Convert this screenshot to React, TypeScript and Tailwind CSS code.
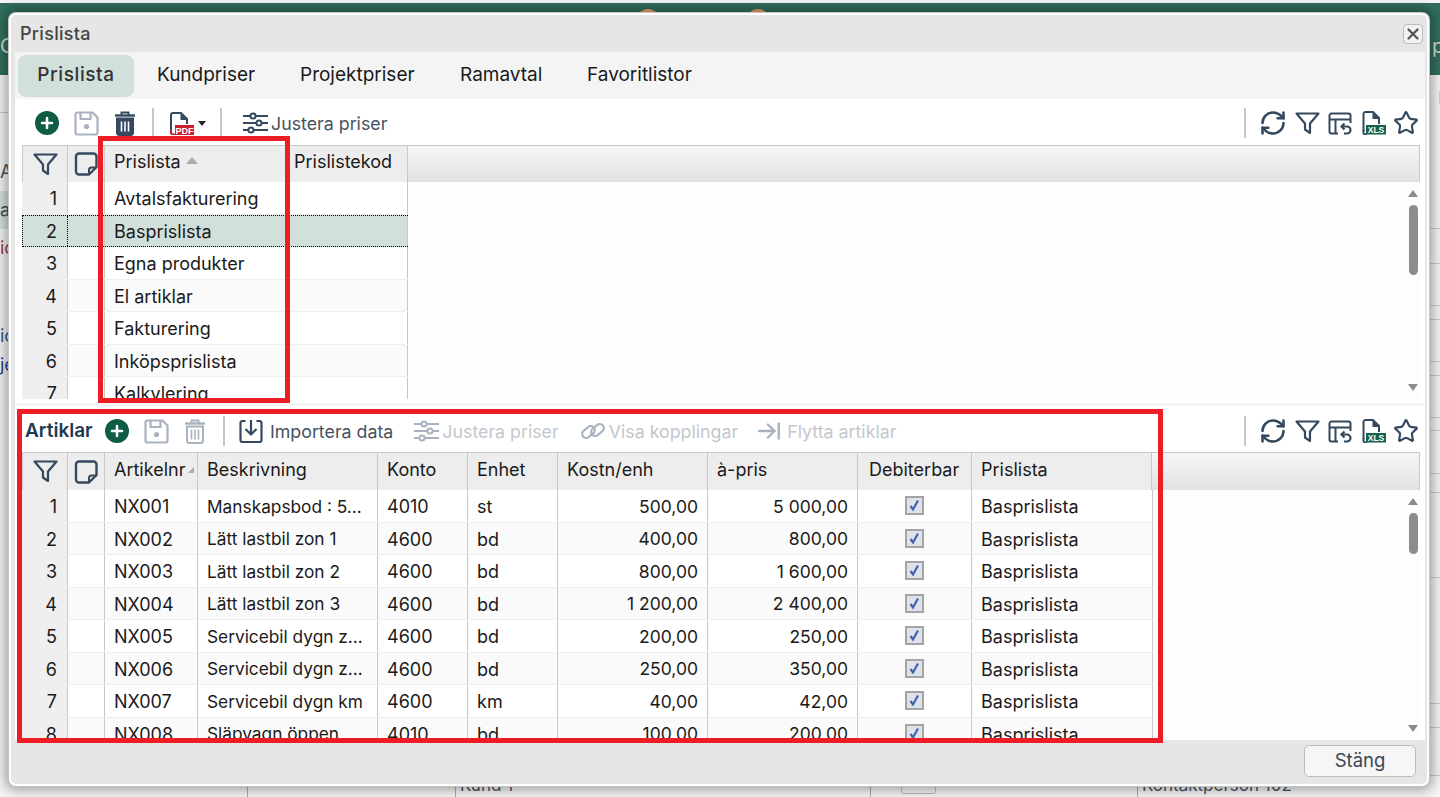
import React from "react";
import { RefreshCw, Star, ArrowRightToLine, X } from "lucide-react";

const INK = "#34495e";
const OFF = "#a8b3bf";

const firstRows = ["Avtalsfakturering", "Basprislista", "Egna produkter", "El artiklar", "Fakturering", "Inköpsprislista", "Kalkylering"];

const articles = [
  ["NX001", "Manskapsbod : 5…", "4010", "st", "500,00", "5 000,00"],
  ["NX002", "Lätt lastbil zon 1", "4600", "bd", "400,00", "800,00"],
  ["NX003", "Lätt lastbil zon 2", "4600", "bd", "800,00", "1 600,00"],
  ["NX004", "Lätt lastbil zon 3", "4600", "bd", "1 200,00", "2 400,00"],
  ["NX005", "Servicebil dygn z…", "4600", "bd", "200,00", "250,00"],
  ["NX006", "Servicebil dygn z…", "4600", "bd", "250,00", "350,00"],
  ["NX007", "Servicebil dygn km", "4600", "km", "40,00", "42,00"],
  ["NX008", "Släpvagn öppen", "4010", "bd", "100,00", "200,00"],
];

const rightLines = [228, 263, 305, 319, 361, 375, 417, 430, 473, 492, 577, 703, 727, 775];

const PlusIcon = () => (
  <svg width="24" height="24" viewBox="0 0 24 24">
    <circle cx="12" cy="12" r="12" fill="#0f5c46" />
    <path d="M12 7v10M7 12h10" stroke="#fff" strokeWidth="2.6" strokeLinecap="round" />
  </svg>
);

const SaveIcon = ({ color = OFF }: { color?: string }) => (
  <svg width="25" height="25" viewBox="0 0 25 25" fill="none" stroke={color} strokeWidth="2.2" strokeLinejoin="round">
    <path d="M3.5 1.5h15l5 5v15a2 2 0 0 1-2 2h-18a2 2 0 0 1-2-2v-18a2 2 0 0 1 2-2z" />
    <path d="M6.5 1.5v6.5h10v-6.5" />
    <circle cx="12.5" cy="15.5" r="2.6" fill={color} stroke="none" />
  </svg>
);

const TrashIcon = ({ color = INK, filled = true }: { color?: string; filled?: boolean }) => (
  <svg width="22" height="25" viewBox="0 0 22 25" fill="none" stroke={color} strokeWidth="2">
    <path d="M1 4.5h20" strokeWidth="2.4" />
    <path d="M7.5 4V1.5h7V4" />
    <path d="M3 7.5h16v14a2.5 2.5 0 0 1-2.5 2.5h-11A2.5 2.5 0 0 1 3 21.5z" fill={filled ? color : "none"} />
    <path d="M7.5 10.5v10M11 10.5v10M14.5 10.5v10" stroke={filled ? "#fff" : color} strokeWidth="1.6" />
  </svg>
);

const PdfIcon = () => (
  <svg width="24" height="23" viewBox="0 0 24 23" fill="none">
    <path d="M1 20V3a2 2 0 0 1 2-2h8l6 6v5" stroke={INK} strokeWidth="2" />
    <path d="M1 18v2.5a2 2 0 0 0 2 2h3" stroke="#c8202c" strokeWidth="2" />
    <path d="M10.5 1v7h7z" fill={INK} />
    <rect x="5" y="13" width="19" height="10" fill="#c8202c" />
    <text x="14.5" y="21.5" fontSize="9" fontWeight="700" fill="#fff" textAnchor="middle" fontFamily="Liberation Sans, sans-serif">PDF</text>
  </svg>
);

const XlsIcon = () => (
  <svg width="24" height="24" viewBox="0 0 24 24" fill="none">
    <path d="M1.5 20V3a2 2 0 0 1 2-2h7.5l6 6v6" stroke={INK} strokeWidth="2" />
    <path d="M10.5 1v7h7z" fill={INK} />
    <rect x="4" y="14" width="20" height="9.5" fill="#14624a" />
    <path d="M1.5 19v2.5a2 2 0 0 0 2 2H5" stroke={INK} strokeWidth="2" />
    <text x="14" y="22" fontSize="8.5" fontWeight="700" fill="#fff" textAnchor="middle" fontFamily="Liberation Sans, sans-serif">XLS</text>
  </svg>
);

const SlidersIcon = ({ color = INK }: { color?: string }) => (
  <svg width="25" height="24" viewBox="0 0 25 24" fill="none" stroke={color} strokeWidth="2">
    <path d="M0 5h7M13 5h12M0 12h13M19 12h6M0 19h5M11 19h14" />
    <circle cx="10" cy="5" r="2.6" />
    <circle cx="16" cy="12" r="2.6" />
    <circle cx="8" cy="19" r="2.6" />
  </svg>
);

const FilterIcon = () => (
  <svg width="25" height="23" viewBox="0 0 25 23" fill="none" stroke={INK} strokeWidth="2.2" strokeLinejoin="round">
    <path d="M1.5 1.5h22l-8.5 10v9.5l-5-3.5v-6z" />
  </svg>
);

const NoteIcon = () => (
  <svg width="24" height="24" viewBox="0 0 24 24" fill="none" stroke={INK} strokeWidth="2.4" strokeLinejoin="round">
    <path d="M5 1.5h14.5a3 3 0 0 1 3 3V15l-7.5 7.5H5a3 3 0 0 1-3-3v-15a3 3 0 0 1 3-3z" />
    <path d="M22.5 15.5h-5a2.5 2.5 0 0 0-2.5 2.5v4.5" strokeWidth="2" />
  </svg>
);

const TableUndoIcon = () => (
  <svg width="24" height="23" viewBox="0 0 24 23" fill="none" stroke={INK} strokeWidth="2">
    <path d="M10 21.5H3.5a2 2 0 0 1-2-2v-16a2 2 0 0 1 2-2h17a2 2 0 0 1 2 2V11" strokeLinejoin="round" />
    <path d="M1.5 7.5h21M7.5 7.5v14" />
    <path d="M13.5 14.5h5.5a3.2 3.2 0 0 1 0 7h-3" strokeWidth="2.2" />
    <path d="M16.5 11.5l-3 3 3 3" strokeWidth="2.2" />
  </svg>
);

const ImportIcon = () => (
  <svg width="24" height="24" viewBox="0 0 24 24" fill="none" stroke={INK} strokeWidth="2.2" strokeLinejoin="round">
    <path d="M6.5 2H3.5a2 2 0 0 0-2 2v17a2 2 0 0 0 2 2h17a2 2 0 0 0 2-2V4a2 2 0 0 0-2-2h-3" />
    <path d="M12 1v14M6.5 10l5.5 5.5L17.5 10" />
  </svg>
);

const LinkIcon = () => (
  <svg width="24" height="20" viewBox="0 0 24 20" fill="none" stroke={OFF} strokeWidth="2.2">
    <rect x="0.5" y="7" width="14" height="8" rx="4" transform="rotate(-40 7.5 11)" />
    <rect x="9.5" y="5" width="14" height="8" rx="4" transform="rotate(-40 16.5 9)" />
  </svg>
);

const Caret = () => <span className="w-0 h-0 border-x-[4px] border-x-transparent border-t-[5px] border-t-[#222]" />;

const Divider = () => <span className="w-[2px] h-[30px] bg-[#c8c8c8]" />;

const RightTools = () => (
  <div className="ml-auto flex items-center">
    <Divider />
    <span className="ml-[13px] w-[28px] flex justify-center">
      <RefreshCw size={28} color={INK} strokeWidth={2.2} />
    </span>
    <span className="ml-[8px] w-[25px] flex justify-center"><FilterIcon /></span>
    <span className="ml-[8px] w-[24px] flex justify-center"><TableUndoIcon /></span>
    <span className="ml-[10px] w-[24px] flex justify-center"><XlsIcon /></span>
    <span className="ml-[7px] w-[26px] flex justify-center">
      <Star size={26} color={INK} strokeWidth={2} />
    </span>
  </div>
);

const CheckBox = () => (
  <span className="w-[19px] h-[19px] border-2 border-[#a4a4a4] bg-[#dfe2ec] flex items-center justify-center">
    <svg width="13" height="13" viewBox="0 0 13 13" fill="none" stroke="#4263ad" strokeWidth="2.2">
      <path d="M2.5 7l2.5 3.5L10 1.5" />
    </svg>
  </span>
);

const HeadCell = ({ className, children }: { className: string; children?: React.ReactNode }) => (
  <div className={`h-full shrink-0 border-r border-[#c8c8c8] bg-[#ededed] flex items-center ${className}`}>{children}</div>
);

const Scrollbar = ({ thumb }: { thumb: string }) => (
  <div className="ml-auto mr-[2px] w-[10px] pt-[8px] pb-[8px] flex flex-col items-center">
    <span className="w-0 h-0 border-x-[5px] border-x-transparent border-b-[7px] border-b-[#8c8c8c]" />
    <span className={`mt-[8px] w-[9px] rounded-full bg-[#8c8c8c] ${thumb}`} />
    <span className="mt-auto w-0 h-0 border-x-[5px] border-x-transparent border-t-[7px] border-t-[#8c8c8c]" />
  </div>
);

const ToolButton = ({ label, off, icon, className, gap }: { label: string; off?: boolean; icon: React.ReactNode; className: string; gap: string }) => (
  <span className={`flex items-center whitespace-nowrap text-[17.8px] ${off ? "text-[#c3c7cc]" : "text-[#46525f]"} ${className}`}>
    {icon}
    <span className={`pt-[3px] ${gap}`}>{label}</span>
  </span>
);

export default function App() {
  return (
    <div className="relative h-[797px] overflow-hidden bg-[#f4f4f4] font-['Inter',sans-serif] text-[18px] text-[#1a1a1a]">
      {/* the page behind the dialog */}
      <div className="h-[3px]" />
      <header className="h-[72px] bg-[#316e5e] flex items-start text-[#cfdcd8] text-[20px] overflow-hidden">
        <span className="mt-[28px] w-[9px]">C</span>
        <span className="ml-[627px] mt-[6px] w-[24px] h-[24px] rounded-full bg-[#f4a06f]" />
        <span className="ml-[86px] mt-[6px] w-[24px] h-[24px] rounded-full bg-[#f4a06f]" />
        <span className="ml-auto mt-[28px] w-[8px]">p</span>
      </header>
      <div className="flex h-[722px]">
        <aside className="w-[9px] overflow-hidden text-[18px] text-[#46525f] whitespace-nowrap">
          <div className="h-[38px] border-b border-[#c8c8c8]" />
          <div className="h-[78px] pt-[40px] leading-[38px]">Al</div>
          <div className="h-[38px] bg-[#d5e0dc] leading-[38px]">a</div>
          <div className="h-[38px] text-[#a33a3a] leading-[38px]">ic</div>
          <div className="h-[54px]" />
          <div className="h-[29px] text-[#2c5a8c] leading-[29px]">ic</div>
          <div className="h-[29px] text-[#1f3f8c] leading-[29px]">je</div>
        </aside>
        <main className="flex-1 flex flex-col justify-end">
          <div className="h-[24px] flex text-[17px] text-[#46525f] leading-[24px]">
            <div className="w-[238px]" />
            <div className="w-[208px] border-l border-[#aaa]" />
            <div className="w-[415px] border-l border-[#aaa] pl-[4px]">Kund 1</div>
            <div className="w-[267px] border-l border-[#aaa] pl-[30px]">
              <span className="block w-[35px] h-[21px] border border-[#bbb] rounded-[3px]" />
            </div>
            <div className="flex-1 border-l border-[#aaa] pl-[4px] whitespace-nowrap">Kontaktperson 102</div>
          </div>
        </main>
        <aside className="w-[11px] flex flex-col items-end">
          <span className="mt-[16px] w-[1px] h-[13px] bg-[#f4c99a]" />
          {rightLines.map((y, i) => (
            <span
              key={y}
              className="block w-full h-px bg-[#c9c9d6] shrink-0"
              style={{ marginTop: y - (i ? rightLines[i - 1] + 1 : 104) }}
            />
          ))}
        </aside>
      </div>

      {/* dialog */}
      <div className="absolute left-[9px] top-[13px] w-[1420px] h-[773px] rounded-[7px] border-2 border-white bg-[#e6e6e6] flex flex-col shadow-[0_0_0_1px_#c4c4c4,0_0_12px_4px_rgba(0,0,0,0.35)]">
        <div className="h-[37px] shrink-0 flex items-center pl-[9px] pr-[4px] text-[#444] font-medium tracking-[0.3px]">
          <span>Prislista</span>
          <button className="ml-auto w-[20px] h-[20px] rounded-[4px] border border-[#bcbcbc] bg-[#f2f2f2] flex items-center justify-center">
            <X size={18} color="#555" strokeWidth={3} />
          </button>
        </div>

        <div className="ml-[4px] mr-[2px] flex flex-col h-[688px] shrink-0">
          <nav className="h-[47px] shrink-0 bg-[#f4f4f4] flex items-center pl-[3px] text-[19px]">
            <span className="w-[116px] h-[42px] rounded-[8px] bg-[#d2e0dc] flex items-center justify-center font-medium tracking-[0.6px] text-[#333]">Prislista</span>
            <span className="w-[143px] pl-[23px]">Kundpriser</span>
            <span className="w-[160px] pl-[23px]">Projektpriser</span>
            <span className="w-[127px] pl-[23px]">Ramavtal</span>
            <span className="pl-[23px]">Favoritlistor</span>
          </nav>

          {/* prislistor */}
          <section className="h-[304px] shrink-0 bg-white">
            <div className="h-[46px] flex items-center pl-[20px] pr-[6px] pt-[2px]">
              <PlusIcon />
              <span className="ml-[15px] flex"><SaveIcon /></span>
              <span className="ml-[15px] flex"><TrashIcon /></span>
              <span className="ml-[16px] flex"><Divider /></span>
              <span className="ml-[16px] flex"><PdfIcon /></span>
              <span className="ml-[4px] flex"><Caret /></span>
              <span className="ml-[14px] flex"><Divider /></span>
              <ToolButton className="ml-[21px]" gap="ml-[3px]" label="Justera priser" icon={<SlidersIcon />} />
              <RightTools />
            </div>
            <div className="ml-[7px] mr-[5px]">
              <div className="h-[37px] flex border-t border-l border-r border-[#c8c8c8] bg-gradient-to-b from-[#f6f6f6] to-[#e3e2e2]">
                <HeadCell className="w-[45px] justify-center"><FilterIcon /></HeadCell>
                <HeadCell className="w-[37px] justify-center"><NoteIcon /></HeadCell>
                <HeadCell className="w-[181px] pl-[9px] pb-[6px]">
                  Prislista
                  <span className="ml-[5px] mb-[2px] w-0 h-0 border-x-[6px] border-x-transparent border-b-[7px] border-b-[#aaa]" />
                </HeadCell>
                <HeadCell className="w-[122px] pl-[8px] pb-[6px]">Prislistekod</HeadCell>
              </div>
              <div className="h-[217px] flex overflow-hidden bg-[#fdfdfd]">
                <div className="w-[386px] shrink-0">
                  {firstRows.map((name, i) => (
                    <div
                      key={name}
                      className={`h-[32.5px] flex ${i === 1 ? "bg-[#d2e0dc] border-y border-l border-dotted border-black" : i % 2 ? "bg-[#fafafa] border-b border-[#eee]" : "bg-white border-b border-[#eee]"}`}
                    >
                      <div className={`shrink-0 pr-[10px] pt-[2px] flex items-center justify-end border-r ${i === 1 ? "w-[45px] border-dotted border-black" : "w-[46px] bg-[#efefef] border-[#c8c8c8]"}`}>{i + 1}</div>
                      <div className="w-[37px] shrink-0 border-r border-[#c8c8c8]" />
                      <div className="w-[181px] shrink-0 pl-[9px] pt-[2px] flex items-center whitespace-nowrap border-r border-[#c8c8c8]">{name}</div>
                      <div className="flex-1 border-r border-[#c8c8c8]" />
                    </div>
                  ))}
                </div>
                <Scrollbar thumb="h-[70px]" />
              </div>
            </div>
          </section>

          <div className="h-[3px] shrink-0 bg-[#f4f4f4]" />

          {/* artiklar */}
          <section className="h-[334px] shrink-0 bg-white">
            <div className="h-[46px] flex items-center pl-[10px] pr-[6px] pt-[4px]">
              <span className="w-[80px] font-semibold text-[19px] text-[#1e3a52]">Artiklar</span>
              <PlusIcon />
              <span className="ml-[15px] flex"><SaveIcon /></span>
              <span className="ml-[15px] flex"><TrashIcon color={OFF} filled={false} /></span>
              <span className="ml-[17px] flex"><Divider /></span>
              <ToolButton className="ml-[14px]" gap="ml-[7px]" label="Importera data" icon={<ImportIcon />} />
              <ToolButton className="ml-[21px]" gap="ml-[3px]" off label="Justera priser" icon={<SlidersIcon color={OFF} />} />
              <ToolButton className="ml-[22px]" gap="ml-[4px]" off label="Visa kopplingar" icon={<LinkIcon />} />
              <ToolButton className="ml-[18px]" gap="ml-[5px]" off label="Flytta artiklar" icon={<ArrowRightToLine size={26} color={OFF} strokeWidth={2.2} />} />
              <RightTools />
            </div>
            <div className="ml-[7px] mr-[5px]">
              <div className="h-[38px] flex border-t border-l border-r border-[#c8c8c8] bg-gradient-to-b from-[#f6f6f6] to-[#e3e2e2]">
                <HeadCell className="w-[45px] justify-center"><FilterIcon /></HeadCell>
                <HeadCell className="w-[37px] justify-center"><NoteIcon /></HeadCell>
                <HeadCell className="w-[93px] pl-[9px] pb-[4px] overflow-hidden whitespace-nowrap">
                  Artikelnr
                  <span className="ml-[3px] w-0 h-0 border-l-[6px] border-l-transparent border-b-[6px] border-b-[#aaa]" />
                </HeadCell>
                <HeadCell className="w-[180px] pl-[9px] pb-[4px]">Beskrivning</HeadCell>
                <HeadCell className="w-[90px] pl-[9px] pb-[4px]">Konto</HeadCell>
                <HeadCell className="w-[90px] pl-[9px] pb-[4px]">Enhet</HeadCell>
                <HeadCell className="w-[150px] pl-[9px] pb-[4px]">Kostn/enh</HeadCell>
                <HeadCell className="w-[150px] pl-[9px] pb-[4px]">à-pris</HeadCell>
                <HeadCell className="w-[114px] pl-[11px] pb-[4px] whitespace-nowrap">Debiterbar</HeadCell>
                <HeadCell className="w-[180px] pl-[9px] pb-[4px]">Prislista</HeadCell>
              </div>
              <div className="h-[250px] flex overflow-hidden bg-[#fdfdfd]">
                <div className="w-[1131px] shrink-0">
                  {articles.map((row, i) => (
                    <div key={row[0]} className={`h-[32.5px] flex border-b border-[#eee] ${i % 2 ? "bg-[#fafafa]" : "bg-white"}`}>
                      <div className="w-[46px] shrink-0 pr-[10px] pt-[2px] flex items-center justify-end bg-[#efefef] border-r border-[#c8c8c8]">{i + 1}</div>
                      <div className="w-[37px] shrink-0 border-r border-[#c8c8c8]" />
                      <div className="w-[93px] shrink-0 pl-[9px] pt-[2px] flex items-center border-r border-[#c8c8c8]">{row[0]}</div>
                      <div className="w-[180px] shrink-0 pl-[9px] pt-[2px] text-[17.3px] flex items-center whitespace-nowrap border-r border-[#c8c8c8]">{row[1]}</div>
                      <div className="w-[90px] shrink-0 pl-[9px] pt-[2px] flex items-center border-r border-[#c8c8c8]">{row[2]}</div>
                      <div className="w-[90px] shrink-0 pl-[9px] pt-[2px] flex items-center border-r border-[#c8c8c8]">{row[3]}</div>
                      <div className="w-[150px] shrink-0 pr-[9px] pt-[2px] text-[17.5px] flex items-center justify-end border-r border-[#c8c8c8]">{row[4]}</div>
                      <div className="w-[150px] shrink-0 pr-[9px] pt-[2px] text-[17.5px] flex items-center justify-end border-r border-[#c8c8c8]">{row[5]}</div>
                      <div className="w-[114px] shrink-0 flex items-center justify-center border-r border-[#c8c8c8]"><CheckBox /></div>
                      <div className="flex-1 pl-[9px] pt-[2px] flex items-center border-r border-[#c8c8c8]">Basprislista</div>
                    </div>
                  ))}
                </div>
                <Scrollbar thumb="h-[41px]" />
              </div>
            </div>
          </section>
        </div>

        <div className="flex-1 flex items-start justify-end pt-[5px] pr-[11px]">
          <button className="w-[112px] h-[32px] rounded-[5px] border border-[#bcbcbc] bg-[#f6f6f6] text-[18.5px] text-[#3a4656]">Stäng</button>
        </div>

        {/* the red marks drawn on the screenshot */}
        <div className="absolute left-[87px] top-[121px] w-[192px] h-[267px] border-[5px] border-[#ee1c25]" />
        <div className="absolute left-[6px] top-[394px] w-[1146px] h-[334px] border-[5px] border-[#ee1c25]" />
      </div>
    </div>
  );
}
